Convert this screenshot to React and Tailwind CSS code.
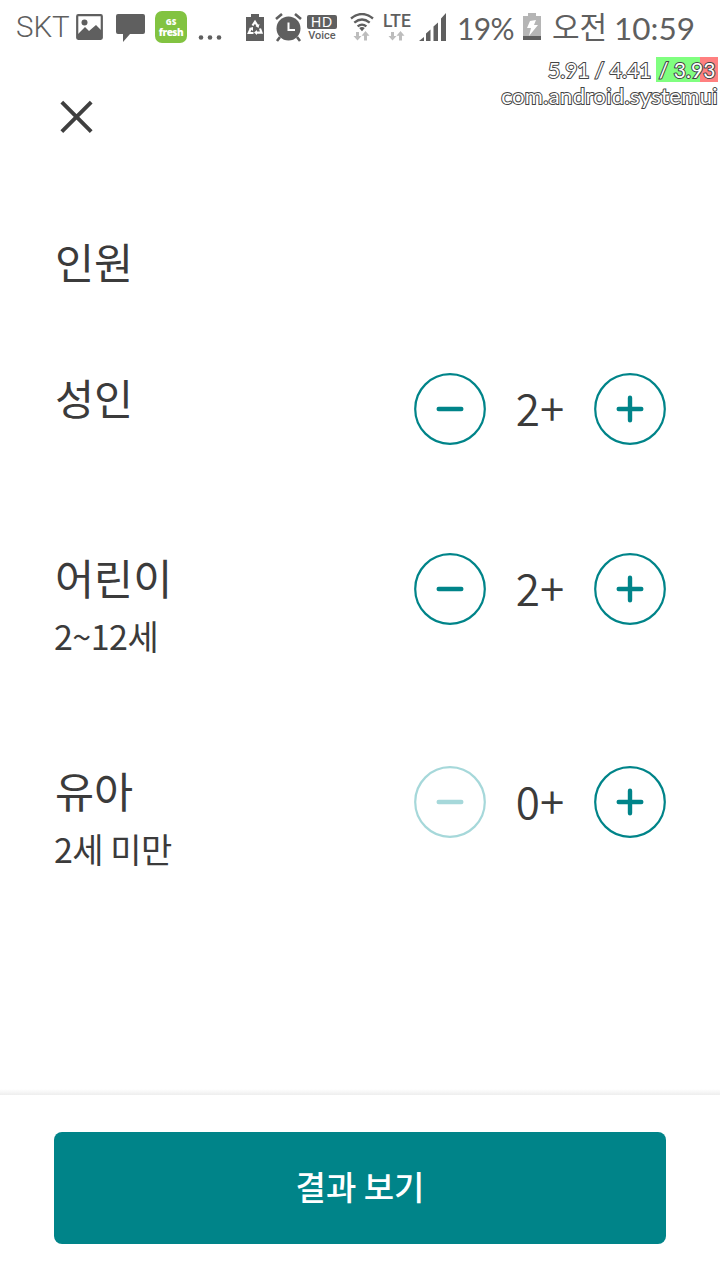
import clsx from 'clsx';
import { useState } from 'react';

const initialGuests = [
    { id: 'adults', name: '성인', count: 2, className: 'h-[180px]' },
    { id: 'children', name: '어린이', note: '2~12세', count: 2, className: 'h-[213px]' },
    { id: 'infants', name: '유아', note: '2세 미만', count: 0, className: 'h-[180px]' },
];

function App() {
    const [guests, setGuests] = useState(initialGuests);

    const changeCount = (id, delta) => {
        setGuests(guests.map((guest) => (guest.id === id ? { ...guest, count: guest.count + delta } : guest)));
    };

    return (
        <div className="relative flex h-[1280px] w-[720px] flex-col overflow-hidden bg-white font-['Noto_Sans_CJK_KR',sans-serif] text-[#3b3b3b]">
            <StatusBar />
            <CpuOverlay />
            <main className="flex flex-1 flex-col px-[54px]">
                <button className="mt-[46px] ml-[6px] size-[34px]" aria-label="닫기">
                    <svg viewBox="0 0 34 34" className="size-full" stroke="#3f3f3f" strokeWidth="3.9">
                        <path d="M1.8 2.2 31.2 31.6M31.2 2.2 1.8 31.6" />
                    </svg>
                </button>
                <h1 className="mt-[97px] ml-px h-[136px] text-[42.5px] leading-[60px]">인원</h1>
                {guests.map((guest) => (
                    <GuestRow key={guest.id} guest={guest} onChange={(delta) => changeCount(guest.id, delta)} />
                ))}
            </main>
            <div className="h-[6px] bg-linear-to-b from-white to-[#eeeeee]" />
            <footer className="h-[185px] px-[54px] pt-[37px]">
                <button className="h-[112px] w-full rounded-[8px] bg-[#008489] pb-[3px] text-[33px] font-medium text-white">
                    결과 보기
                </button>
            </footer>
        </div>
    );
}

function GuestRow({ guest, onChange }) {
    return (
        <section className={clsx('flex items-start justify-between', guest.className)}>
            <div>
                <h2 className="ml-px text-[42.5px] leading-[60px]">{guest.name}</h2>
                {guest.note && <p className="mt-[2px] text-[34px] leading-[54px] tracking-[-0.5px]">{guest.note}</p>}
            </div>
            <div className="mt-[5.5px] flex items-center">
                <RoundButton label="빼기" disabled={guest.count === 0} onClick={() => onChange(-1)}>
                    <path d="M24.7 36H47.3" />
                </RoundButton>
                <div className="w-[108px] pb-[4px] text-center text-[44px] leading-[68px] font-[350]">
                    {guest.count}+
                </div>
                <RoundButton label="더하기" onClick={() => onChange(1)}>
                    <path d="M24.7 36H47.3M36 24.7V47.3" />
                </RoundButton>
            </div>
        </section>
    );
}

function RoundButton({ label, disabled, onClick, children }) {
    return (
        <button
            className={clsx('size-[72px]', disabled ? 'text-[#a6d8da]' : 'text-[#008489]')}
            aria-label={label}
            disabled={disabled}
            onClick={onClick}
        >
            <svg viewBox="0 0 72 72" className="size-full" fill="none" stroke="currentColor" strokeLinecap="round">
                <circle cx="36" cy="36" r="34.8" strokeWidth="2.2" />
                <g strokeWidth="4.4">{children}</g>
            </svg>
        </button>
    );
}

function StatusBar() {
    return (
        <header className="flex h-[54px] items-start text-[#5f5f5f]">
            <span className="ml-[16px] w-[60px] pt-[10px] font-['Roboto',sans-serif] text-[29.5px] leading-[34px] font-[350]">
                SKT
            </span>
            <svg className="mt-[14px] h-[26px] w-[27px]" viewBox="0 0 27 26">
                <rect x="1.2" y="1.2" width="24.6" height="23.6" rx="1" fill="none" stroke="currentColor" strokeWidth="2.2" />
                <circle cx="8.5" cy="8.5" r="3" fill="currentColor" />
                <path d="M2 20 9 13l4 4 7-6 6 6v8H2z" fill="currentColor" />
            </svg>
            <svg className="mt-[14px] ml-[13px] h-[29px] w-[29px]" viewBox="0 0 29 29" fill="currentColor">
                <path d="M2 0h25q2 0 2 2v16q0 2-2 2H14l-7 8v-8H2q-2 0-2-2V2q0-2 2-2z" />
            </svg>
            <div className="mt-[11px] ml-[10px] flex size-[32px] flex-col items-center rounded-[7px] bg-[#82c341] pt-[6px] font-['Open_Sans',sans-serif] font-extrabold text-white">
                <span className="text-[8px] leading-[9px]">GS</span>
                <span className="text-[10px] leading-[12px] tracking-[-0.5px]">fresh</span>
            </div>
            <svg className="mt-[34px] ml-[11px] h-[7px] w-[24px]" viewBox="0 0 24 7" fill="currentColor">
                <circle cx="3" cy="3.5" r="2.3" />
                <circle cx="12" cy="3.5" r="2.3" />
                <circle cx="21" cy="3.5" r="2.3" />
            </svg>
            <svg className="mt-[14px] ml-[24px] h-[27px] w-[18px]" viewBox="0 0 18 27">
                <path d="M5 0h8v3h5v24H0V3h5z" fill="currentColor" />
                <g fill="none" stroke="#fff" strokeWidth="2.2">
                    <path d="M6.5 11.5 9 7.8l2.7 4.2M14 14.5l1.5 4.2h-5M7.5 19H2.8l2-4.5" />
                </g>
                <path d="m13.5 10-1 4-3-2zM11 16v5l-3-2.5zM3 14l4-1v4z" fill="#fff" />
            </svg>
            <svg className="mt-[13px] ml-[11px] h-[29px] w-[27px]" viewBox="0 0 27 29" stroke="currentColor">
                <circle cx="13.5" cy="15.5" r="12" fill="currentColor" stroke="none" />
                <path d="m1 6 6-5M26 6l-6-5M5 24l-3 4M22 24l3 4" strokeWidth="2.6" />
                <path d="M13.5 9.5V17H20" fill="none" stroke="#fff" strokeWidth="2" />
            </svg>
            <div className="mt-[15px] ml-[5px] flex w-[30px] flex-col items-center font-['Roboto',sans-serif]">
                <span className="flex h-[14px] w-full items-center justify-center rounded-[2px] bg-[#5f5f5f] font-['Liberation_Sans',sans-serif] text-[14px] leading-[14px] tracking-[1px] text-white">
                    HD
                </span>
                <span className="text-[11px] leading-[13px] font-medium">Voice</span>
            </div>
            <svg className="mt-[13px] ml-[13px] h-[28px] w-[24px]" viewBox="0 0 24 28" fill="none" stroke="currentColor" strokeWidth="2.3">
                <path d="M1 5.5q11-9 22 0M4.3 9.7q7.7-6.3 15.4 0M7.6 13.4q4.4-3.6 8.8 0" />
                <path d="m9.2 15 2.8 3.2 2.8-3.2q-2.8-1.8-5.6 0z" fill="currentColor" stroke="none" />
                <DataArrows x={4} y={18} />
            </svg>
            <div className="mt-[12px] ml-[9px] w-[30px]">
                <p className="font-['Roboto',sans-serif] text-[17.5px] leading-[18px] font-medium">LTE</p>
                <svg className="h-[12px] w-[30px]" viewBox="0 0 30 12">
                    <DataArrows x={6} y={1} />
                </svg>
            </div>
            <svg className="mt-[13px] ml-[6px] h-[28px] w-[28px]" viewBox="0 0 28 28" fill="currentColor">
                <path d="M0 28 5 24v4zM7 20.5l4.5-4V28H7zM14.5 13.5l4.5-4V28h-4.5zM22 5.5 27 0v28h-5z" />
            </svg>
            <span className="mt-[11px] ml-[10px] w-[63px] font-['Lato',sans-serif] text-[30px] leading-[34px] tracking-[-0.6px] whitespace-nowrap">
                19%
            </span>
            <svg className="mt-[13px] ml-[3px] h-[27px] w-[18px]" viewBox="0 0 18 27">
                <path d="M5 0h8v3h5v24H0V3h5z" fill="#b5b5b5" />
                <path d="M0 23h18v4H0z" fill="#5f5f5f" />
                <path d="m7 8 6-1-2 5h4L6 23l2-8H4z" fill="#fff" />
            </svg>
            <span className="mt-[8px] ml-[11px] w-[62px] text-[30px] leading-[34px]">오전</span>
            <span className="mt-[11px] font-['Lato',sans-serif] text-[31.5px] leading-[34px] whitespace-nowrap">10:59</span>
        </header>
    );
}

function DataArrows({ x, y }) {
    return (
        <g transform={`translate(${x} ${y})`} fill="#bdbdbd" stroke="none">
            <path d="M2 1h3v4h2.5l-4 4.5L-.5 5H2zM10 9.5h3V4.8h2.5L11.5 0l-4 4.8H10z" />
        </g>
    );
}

// Load average readout drawn by the system over every screen
function CpuOverlay() {
    return (
        <div className="absolute top-[57px] right-[2px] flex flex-col items-end font-['Lato',sans-serif] text-[21px] leading-[25px] whitespace-nowrap text-white [-webkit-text-stroke:2px_#444] [paint-order:stroke]">
            <div className="flex h-[25px]">
                <span className="w-[108px]">5.91 / 4.41</span>
                <span className="w-[62px] bg-[linear-gradient(90deg,#80ff80_44px,#ff8080_44px)] pl-[3px]">/ 3.93</span>
            </div>
            <div className="text-[22px] leading-[27px] tracking-[0.36px]">com.android.systemui</div>
        </div>
    );
}

export default App;
